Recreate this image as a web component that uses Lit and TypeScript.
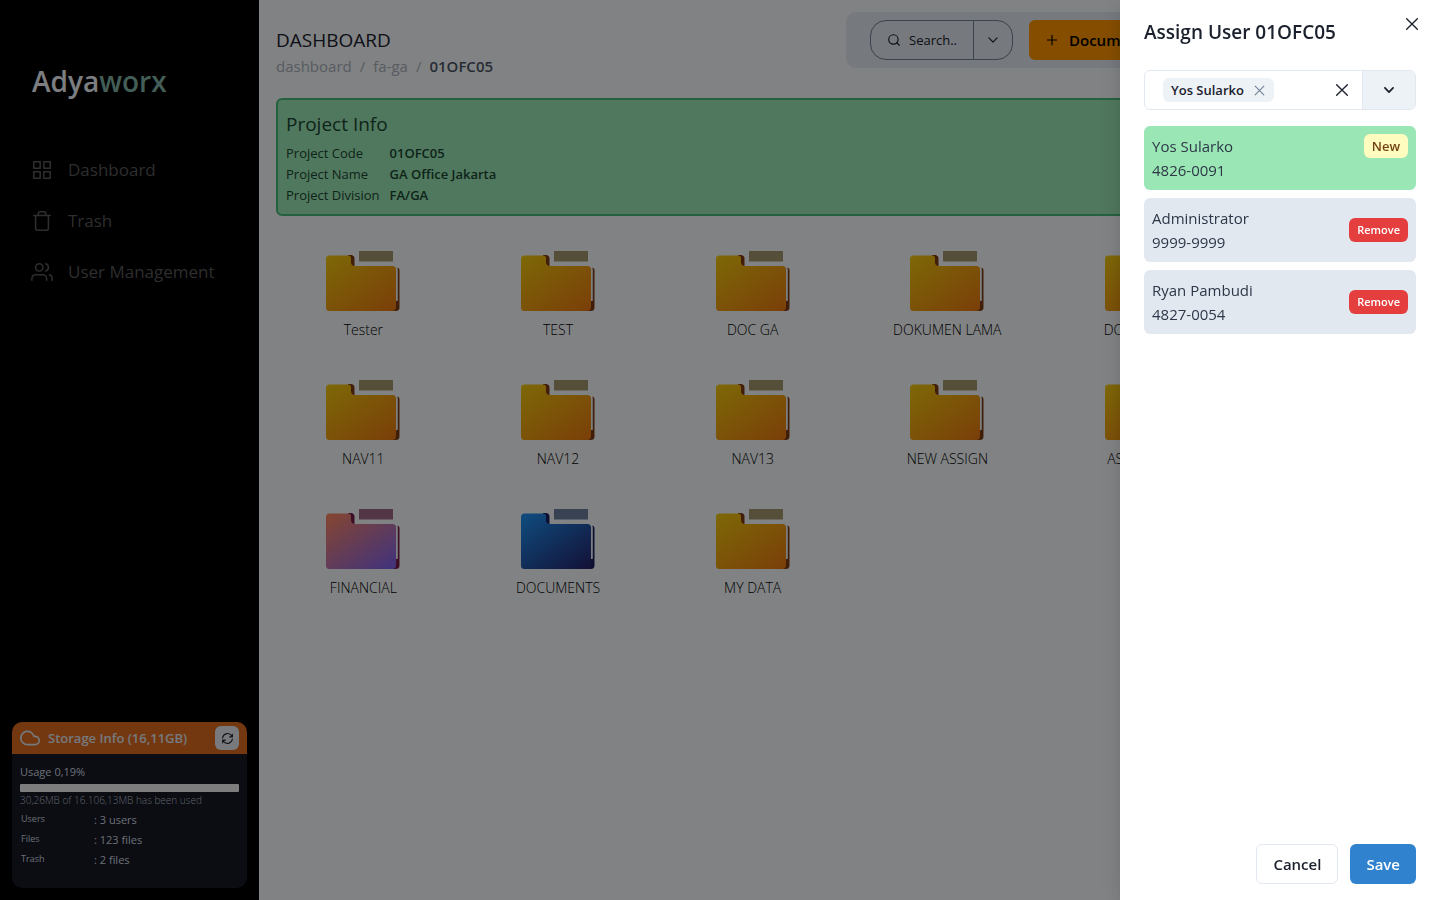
import { LitElement, html, css, svg, nothing } from "lit";
import { customElement, property, state } from "lit/decorators.js";

type Palette = "amber" | "coral" | "blue";
interface Folder { name: string; palette: Palette }
interface Member { name: string; code: string; fresh?: boolean }

const PALETTES: Record<Palette, { from: string; to: string; back: string; paper: string }> = {
  amber: { from: "#f0c60e", to: "#ea7a12", back: "#7d3a12", paper: "#a3966e" },
  coral: { from: "#fd8560", to: "#7f62ee", back: "#781c4c", paper: "#a06884" },
  blue: { from: "#1e90f0", to: "#25246c", back: "#1c1f60", paper: "#6d7f9f" },
};

const FOLDERS: Folder[] = [
  { name: "Tester", palette: "amber" },
  { name: "TEST", palette: "amber" },
  { name: "DOC GA", palette: "amber" },
  { name: "DOKUMEN LAMA", palette: "amber" },
  { name: "DOCUMENT", palette: "amber" },
  { name: "NAV10", palette: "amber" },
  { name: "NAV11", palette: "amber" },
  { name: "NAV12", palette: "amber" },
  { name: "NAV13", palette: "amber" },
  { name: "NEW ASSIGN", palette: "amber" },
  { name: "ASSIGN GA", palette: "amber" },
  { name: "NAV14", palette: "amber" },
  { name: "FINANCIAL", palette: "coral" },
  { name: "DOCUMENTS", palette: "blue" },
  { name: "MY DATA", palette: "amber" },
];

const ICONS = {
  grid: svg`<rect x="3" y="3" width="7" height="7"/><rect x="14" y="3" width="7" height="7"/><rect x="14" y="14" width="7" height="7"/><rect x="3" y="14" width="7" height="7"/>`,
  trash: svg`<path d="M3 6h18M19 6v14a2 2 0 0 1-2 2H7a2 2 0 0 1-2-2V6M8 6V4a2 2 0 0 1 2-2h4a2 2 0 0 1 2 2v2"/>`,
  users: svg`<path d="M17 21v-2a4 4 0 0 0-4-4H5a4 4 0 0 0-4 4v2"/><circle cx="9" cy="7" r="4"/><path d="M23 21v-2a4 4 0 0 0-3-3.87M16 3.13a4 4 0 0 1 0 7.75"/>`,
  cloud: svg`<path d="M18 10h-1.26A8 8 0 1 0 9 20h9a5 5 0 0 0 0-10z"/>`,
  refresh: svg`<path d="M3 11a9 9 0 0 1 15.5-5.2L21 8.5M21 4v5h-5M21 13a9 9 0 0 1-15.500 5.200L3 15.500M3 20v-5h5"/>`,
  search: svg`<circle cx="11" cy="11" r="8"/><path d="m21 21-4.350-4.350"/>`,
  down: svg`<path d="m5 8.500 7 7 7-7"/>`,
  plus: svg`<path d="M12 4v16M4 12h16"/>`,
  close: svg`<path d="m4 4 16 16M20 4 4 20"/>`,
};

const icon = (name: keyof typeof ICONS) =>
  html`<svg class="icon" viewBox="0 0 24 24" aria-hidden="true">${ICONS[name]}</svg>`;

const shared = css`
  * { box-sizing: border-box; }
  button, input { font: inherit; color: inherit; margin: 0; }
  button { cursor: pointer; border: 0; padding: 0; background: none; }
  .icon {
    width: 16px; height: 16px; flex: none; display: block;
    fill: none; stroke: currentColor; stroke-width: 2;
    stroke-linecap: round; stroke-linejoin: round;
  }
`;

@customElement("side-bar")
export class SideBar extends LitElement {
  static styles = [shared, css`
    :host { display: flex; flex-direction: column; background: #000; }
    .logo {
      margin: 63px 32px 57px; font-size: 28px; line-height: 36px; font-weight: 650;
      color: #edf2f7; text-decoration: none;
    }
    .logo span { color: #81b5a5; }
    nav { display: flex; flex-direction: column; gap: 24px; padding: 0 31px; }
    nav a {
      display: flex; align-items: center; gap: 15px; height: 27px;
      font-size: 17px; color: #58585a; text-decoration: none; white-space: nowrap;
    }
    nav .icon { width: 22px; height: 22px; stroke-width: 1.700; }
    .storage {
      margin: auto 12px 12px; height: 166px; border-radius: 10px; overflow: hidden;
      background: #171923; color: #cbd5e0;
    }
    .storage header {
      display: flex; align-items: center; gap: 8px; height: 32px; padding: 0 8px;
      background: #dd6b20; color: #e2e8f0;
    }
    .storage header > .icon { width: 20px; height: 20px; }
    h2 { margin: 0; font-size: 13px; font-weight: 600; flex: 1; white-space: nowrap; }
    .reload {
      display: grid; place-items: center; width: 24px; height: 24px;
      border-radius: 6px; background: #e6eaef; color: #1a202c;
    }
    .reload .icon { width: 13px; height: 13px; }
    .body { padding: 8px; }
    .usage { display: block; font-size: 11px; line-height: 20px; }
    .track { height: 8px; margin-top: 2px; background: #f0f0f2; border-radius: 1px; }
    .note {
      margin: 0 0 2px; font-size: 10px; line-height: 16px; font-weight: 300;
      color: #b4bfcd; white-space: nowrap;
    }
    dl {
      display: grid; grid-template-columns: 73px 1fr; margin: 0 1px;
      line-height: 20px; font-size: 11px;
    }
    dt { font-size: 9px; line-height: 18px; }
    dd { margin: 0; }
  `];

  render() {
    return html`
      <a class="logo" href="#home">Adya<span>worx</span></a>
      <nav aria-label="Main">
        <a href="#dashboard">${icon("grid")}Dashboard</a>
        <a href="#trash">${icon("trash")}Trash</a>
        <a href="#users">${icon("users")}User Management</a>
      </nav>
      <section class="storage">
        <header>
          ${icon("cloud")}
          <h2>Storage Info (16,11GB)</h2>
          <button class="reload" aria-label="Refresh storage">${icon("refresh")}</button>
        </header>
        <div class="body">
          <span class="usage" id="usage">Usage 0,19%</span>
          <div class="track" role="progressbar" aria-labelledby="usage" aria-valuenow="0.19"></div>
          <p class="note">30,26MB of 16.106,13MB has been used</p>
          <dl>
            <dt>Users</dt><dd>: 3 users</dd>
            <dt>Files</dt><dd>: 123 files</dd>
            <dt>Trash</dt><dd>: 2 files</dd>
          </dl>
        </div>
      </section>`;
  }
}

@customElement("folder-tile")
export class FolderTile extends LitElement {
  @property() name = "";
  @property() palette: Palette = "amber";

  static styles = [shared, css`
    :host { display: block; }
    button { display: flex; flex-direction: column; align-items: center; width: 100%; }
    .art { width: 74px; height: 60px; display: block; }
    .label {
      margin-top: 9px; font-size: 14px; line-height: 20px; font-weight: 300;
      white-space: nowrap; color: #000;
    }
  `];

  render() {
    const p = PALETTES[this.palette];
    return html`
      <button>
        <svg class="art" viewBox="0 0 74 60" aria-hidden="true">
          <defs>
            <linearGradient id="front" x1="0.050" y1="0" x2="0.950" y2="1">
              <stop offset="0" stop-color=${p.from} />
              <stop offset="1" stop-color=${p.to} />
            </linearGradient>
          </defs>
          <rect x="33" y="0" width="34" height="10.500" fill=${p.paper} />
          <path d="M22 4h3.500q3 .5 3 3.500v7.500H22z" fill=${p.back} />
          <path d="M71.500 16.500q2 .5 2 2.500v37.500q0 3.500-4 3.500h-3V50h5z" fill=${p.back} />
          <path d="M3.500 4.500H22q3 0 3 3V11q0 4 4 4h37.500q3.500 0 3.500 3.500V56q0 4-4 4H3.500Q0 60 0 56.500V8q0-3.500 3.500-3.500z" fill="url(#front)" />
          <path d="M71 18v31.500" stroke="#e8ecef" stroke-width="1.200" />
        </svg>
        <span class="label">${this.name}</span>
      </button>`;
  }
}

@customElement("assign-drawer")
export class AssignDrawer extends LitElement {
  @state() private members: Member[] = [
    { name: "Yos Sularko", code: "4826-0091", fresh: true },
    { name: "Administrator", code: "9999-9999" },
    { name: "Ryan Pambudi", code: "4827-0054" },
  ];

  static styles = [shared, css`
    :host {
      display: flex; flex-direction: column; background: #fff; color: #1a202c;
      box-shadow: 0 10px 15px -3px rgba(0, 0, 0, .1), 0 4px 6px -2px rgba(0, 0, 0, .05), 0 0 24px rgba(0, 0, 0, .12);
    }
    header { display: flex; justify-content: space-between; padding: 16px 20px 16px 24px; }
    h2 { margin: 0; font-size: 19px; line-height: 32px; font-weight: 550; white-space: nowrap; }
    .dismiss { display: grid; place-items: center; width: 16px; height: 16px; }
    .content { flex: 1; padding: 6px 24px; }
    .picker {
      display: flex; align-items: center; height: 40px; overflow: hidden;
      border: 1px solid #e2e8f0; border-radius: 6px;
    }
    .chip {
      display: flex; align-items: center; gap: 9px; margin-left: 18px; padding: 0 8px;
      height: 24px; border-radius: 6px; background: #edf2f7;
      font-size: 13px; font-weight: 550; white-space: nowrap;
    }
    .chip button { color: #718096; }
    .chip .icon { width: 13px; height: 13px; }
    input { flex: 1; min-width: 0; height: 100%; border: 0; outline: 0; background: none; }
    .clear { padding: 0 12px; }
    .open {
      display: grid; place-items: center; width: 53px; height: 100%;
      border-left: 1px solid #e2e8f0; background: #edf2f7;
    }
    .open .icon { width: 14px; height: 14px; stroke-width: 3; }
    ul { display: grid; gap: 8px; margin: 16px 0 0; padding: 0; list-style: none; }
    li {
      display: flex; justify-content: space-between; align-items: center;
      padding: 8px; border-radius: 6px; background: #e2e8f0;
      font-size: 15px; line-height: 24px; color: #2d3748;
    }
    li.fresh { background: #9ae6b4; align-items: flex-start; }
    li div span { display: block; }
    .badge {
      padding: 0 8px; border-radius: 6px; background: #fefcbf; color: #744210;
      font-size: 13px; font-weight: 550; line-height: 24px;
    }
    .remove {
      height: 24px; padding: 0 8px; border-radius: 6px; background: #e53e3e; color: #fff;
      font-size: 11px; font-weight: 650; line-height: 24px;
    }
    footer { display: flex; justify-content: flex-end; gap: 12px; padding: 16px 24px; }
    footer button {
      height: 40px; padding: 0 16px; border-radius: 6px;
      font-size: 15px; font-weight: 600;
    }
    .cancel { border: 1px solid #e2e8f0; font-weight: 550; }
    .save { background: #3182ce; color: #fff; }
  `];

  private remove(member: Member) {
    this.members = this.members.filter((m) => m !== member);
  }

  render() {
    return html`
      <header>
        <h2>Assign User 01OFC05</h2>
        <button class="dismiss" aria-label="Close">${icon("close")}</button>
      </header>
      <div class="content">
        <div class="picker">
          <span class="chip">Yos Sularko<button aria-label="Remove Yos Sularko">${icon("close")}</button></span>
          <input type="text" aria-label="Select users" />
          <button class="clear" aria-label="Clear selection">${icon("close")}</button>
          <button class="open" aria-label="Show users">${icon("down")}</button>
        </div>
        <ul>
          ${this.members.map((m) => html`
            <li class=${m.fresh ? "fresh" : nothing}>
              <div><span>${m.name}</span><span>${m.code}</span></div>
              ${m.fresh
                ? html`<span class="badge">New</span>`
                : html`<button class="remove" @click=${() => this.remove(m)}>Remove</button>`}
            </li>`)}
        </ul>
      </div>
      <footer>
        <button class="cancel">Cancel</button>
        <button class="save">Save</button>
      </footer>`;
  }
}

@customElement("app-root")
export class AppRoot extends LitElement {
  static styles = [shared, css`
    :host {
      display: grid; grid-template-columns: 259px 1fr; min-height: 100vh;
      font-family: "Open Sans", "Noto Sans", sans-serif; font-size: 15px;
      color: #1a202c; background: #f7fafc;
    }
    main { min-width: 0; padding: 12px 16px 16px; border-left: 1px solid #fff; }
    .top { display: flex; justify-content: space-between; }
    h1 { margin: 14px 0 0; font-size: 19px; line-height: 28px; font-weight: 400; }
    .crumbs { display: flex; gap: 8px; line-height: 24px; color: #a9afb8; }
    .crumbs a { color: inherit; text-decoration: none; }
    .crumbs strong { font-weight: 600; color: #4a5568; }
    .tools {
      display: flex; gap: 16px; min-width: 578px; height: 56px; padding: 8px 24px;
      border-radius: 10px; background: #e2e8f0;
    }
    .search { display: flex; border: 1px solid #718096; border-radius: 16px; font-size: 13px; }
    .search button { display: flex; align-items: center; gap: 8px; padding: 0 16px; }
    .search button + button { border-left: 1px solid #718096; padding: 0 12px; }
    .search .icon { width: 14px; height: 14px; }
    .add {
      display: flex; align-items: center; gap: 10px; padding: 0 16px; height: 40px;
      border-radius: 6px; background: #ff9500; color: #000; font-weight: 600;
    }
    .add .icon { width: 14px; height: 14px; }
    .info {
      margin-top: 20px; padding: 8px; border: 2px solid #48bb78; border-radius: 6px;
      background: #9ae6b4; color: #1c4532;
    }
    h2 { margin: 0 0 3px; font-size: 19px; line-height: 32px; font-weight: 400; }
    dl {
      display: grid; grid-template-columns: max-content 1fr; column-gap: 10px;
      margin: 0; font-size: 13px; line-height: 21px;
    }
    dd { margin: 0; font-weight: 600; }
    .folders {
      display: grid; grid-template-columns: repeat(6, minmax(0, 1fr)); gap: 40px 20px;
      margin-top: 35px;
    }
    .overlay { position: fixed; inset: 0; background: rgba(0, 0, 0, .48); }
    assign-drawer { position: fixed; inset: 0 0 0 auto; width: 320px; }
  `];

  render() {
    return html`
      <side-bar></side-bar>
      <main>
        <div class="top">
          <div>
            <h1>DASHBOARD</h1>
            <nav class="crumbs" aria-label="Breadcrumb">
              <a href="#dashboard">dashboard</a><span>/</span>
              <a href="#fa-ga">fa-ga</a><span>/</span>
              <strong>01OFC05</strong>
            </nav>
          </div>
          <div class="tools">
            <div class="search">
              <button>${icon("search")}Search..</button>
              <button aria-label="Search options">${icon("down")}</button>
            </div>
            <button class="add">${icon("plus")}Document</button>
          </div>
        </div>
        <section class="info">
          <h2>Project Info</h2>
          <dl>
            <dt>Project Code</dt><dd>01OFC05</dd>
            <dt>Project Name</dt><dd>GA Office Jakarta</dd>
            <dt>Project Division</dt><dd>FA/GA</dd>
          </dl>
        </section>
        <section class="folders" aria-label="Folders">
          ${FOLDERS.map((f) => html`<folder-tile .name=${f.name} .palette=${f.palette}></folder-tile>`)}
        </section>
      </main>
      <div class="overlay"></div>
      <assign-drawer role="dialog" aria-modal="true" aria-label="Assign User 01OFC05"></assign-drawer>`;
  }
}
